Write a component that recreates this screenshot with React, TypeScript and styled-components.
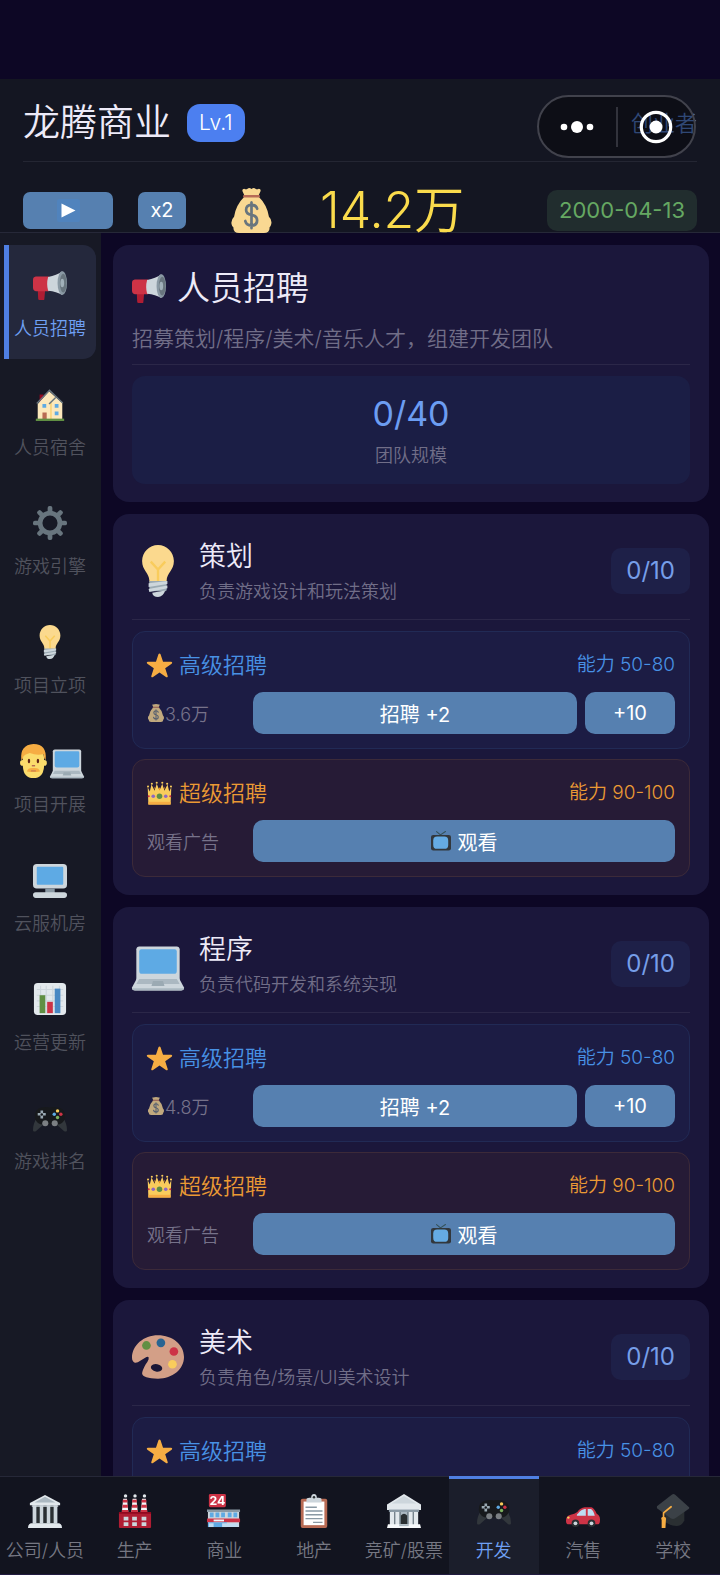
import React from "react";
import styled, { createGlobalStyle, css } from "styled-components";

const GlobalStyle = createGlobalStyle`
  *, *::before, *::after { box-sizing: border-box; }
  html, body { margin: 0; padding: 0; background: #0d0725; }
  body, button {
    font-family: Inter, "Noto Sans CJK SC", sans-serif;
    font-weight: 350;
  }
  h1, h2, h3, p { margin: 0; font-weight: inherit; }
  button { border: 0; padding: 0; color: inherit; cursor: pointer; }
  a { color: inherit; text-decoration: none; }
`;

/* ---------- icons ---------- */

const art = {
  megaphone: (
    <>
      <path fill="#be1931" d="M5 22h8l-1 11q0 1-1 1H7q-1.500 0-1.500-1.500z" />
      <path fill="#dd2e44" d="M3 9h14v15.500H3q-3-.5-3-3.500v-8.500Q0 9.500 3 9z" />
      <path fill="#ccd6dd" d="M16 9.500Q25 8 31 3.500v25Q25 25 16 24q-2-7 0-14.500z" />
      <ellipse cx="31" cy="16" rx="5" ry="12.500" fill="#8899a6" />
      <ellipse cx="32" cy="16" rx="3.500" ry="10" fill="#66757f" />
      <ellipse cx="31" cy="16" rx="2" ry="4.500" fill="#9fb0bb" />
    </>
  ),
  house: (
    <>
      <path fill="#a0041e" d="M7 8h4v8H7z" />
      <path fill="#ffe8b6" d="M5 18 17 4.500 31 17v17H5z" />
      <path fill="#ffcc4d" d="M18 16h2v18h-2z" opacity=".6" />
      <path fill="none" stroke="#66757f" strokeWidth="1.500" d="m4 17.500 13.500-14L31.500 17M24 11l-7 7" />
      <path fill="#55acee" d="M10 18h4v4h-4zm13 0h4v4h-4zm0 8h4v4h-4z" />
      <path fill="#c1694f" d="M10 27h4.500v7H10z" />
      <path fill="#5c913b" d="M3 33.500h30V36H3z" />
    </>
  ),
  gear: (
    <>
      <g fill="#66757f">
        {[0, 45, 90, 135, 180, 225, 270, 315].map((a) => (
          <rect key={a} x="15.500" y="0" width="5" height="9" rx="2" transform={`rotate(${a} 18 18)`} />
        ))}
      </g>
      <circle cx="18" cy="18" r="10.500" fill="none" stroke="#66757f" strokeWidth="5" />
    </>
  ),
  bulb: (
    <>
      <path fill="#ffd983" d="M29 11.060c0 6.440-5 8.440-5 13.440 0 3.100-3.300 3-6 3-3 0-6-.1-6-3 0-5-5-7-5-13.440C7 5 12 0 18 0s11 5 11 11.060z" />
      <path fill="none" stroke="#ffcc4d" strokeWidth="1.600" d="M13 11.500 18 17l5-5.500M18 17v8" />
      <path fill="#99aab5" d="M12 25h12v6q0 1-1 1H13q-1 0-1-1z" />
      <path fill="#ccd6dd" d="M11.500 26.500 24.500 25v2l-13 2zm0 4L24.500 28v2l-12.500 2.500zM14 33l9-1.500Q21.500 36 18 36t-4-3z" />
    </>
  ),
  person: (
    <g transform="translate(3 0) scale(0.860 1)">
      <circle cx="4.500" cy="20" r="3" fill="#ffdc5d" />
      <circle cx="31.500" cy="20" r="3" fill="#ffdc5d" />
      <path fill="#ffdc5d" d="M5 14Q5 4 18 4t13 10v10q-1 12-13 12T5 24z" />
      <path fill="#ffac33" d="M3 17Q1 1 18 0q17 0 15 17-2-1-2.500-6.500-8 2-17-1-6 1.500-8 3.500Q5 17 3 17z" />
      <ellipse cx="12.500" cy="18" rx="1.500" ry="2.300" fill="#662113" />
      <ellipse cx="23.500" cy="18" rx="1.500" ry="2.300" fill="#662113" />
      <path fill="none" stroke="#c1694f" strokeWidth="1.500" d="M16 23h4" />
      <path fill="#ffac33" d="M10 29q1-4 8-3.500 7-.5 8 3.500-8 1.500-16 0z" />
      <path fill="none" stroke="#c1694f" d="M15 28.500h6" />
    </g>
  ),
  laptop: (
    <g transform="translate(0 1.800)">
      <path fill="#ccd6dd" d="M33 29.100C33 30.800 32.700 31 31 31H5c-1.700 0-2-.2-2-1.900V6c0-1.100.9-2 2-2h26c1.100 0 2 .9 2 2z" />
      <path fill="#55acee" d="M6.500 6h23q1.500 0 1.500 1.500V21q0 2-2 2H7q-2 0-2-2V7.500Q5 6 6.500 6z" />
      <path fill="#ccd6dd" d="M4 25h28l4 7.500q.3 2-2 2H2q-2.300 0-2-2z" />
      <path fill="#aab8c2" d="M5 26.500h26l2 3.500H3z" />
      <path fill="#99aab5" d="M14.500 28h7l1 3.500h-9z" />
      <path fill="#aab8c2" d="M0 33h36q-.3 1.500-2 1.500H2Q.3 34.500 0 33z" />
    </g>
  ),
  desktop: (
    <>
      <rect x="0" y="1" width="36" height="26" rx="4" fill="#ccd6dd" />
      <rect x="4" y="4" width="28" height="19" rx="1" fill="#55acee" />
      <path fill="#8899a6" d="M13 27h10v5H13z" />
      <rect x="0" y="31" width="36" height="6" rx="3" fill="#ccd6dd" />
    </>
  ),
  chart: (
    <>
      <rect x="1" y="1" width="34" height="34" rx="4" fill="#e1e8ed" />
      <path fill="none" stroke="#ccd6dd" strokeWidth="1.200" d="M4 8h28M4 14h28M4 20h28M4 26h28M8 4v29M14 4v29M21 4v29M28 4v29" />
      <path fill="#5c913b" d="M7 14h6v19H7z" />
      <path fill="#dd2e44" d="M15 21h6v12h-6z" />
      <path fill="#4289cc" d="M23 7h6v26h-6z" />
    </>
  ),
  gamepad: (
    <>
      <path fill="#31373d" d="M4 18Q0 24 0 31q0 2 3 1l8-7zM32 18q4 6 4 13 0 2-3 1l-8-7z" />
      <path fill="#17191c" d="M9 7q6-1.500 9 0 3-1.500 9 0 8 2 7 11-2 7-9 7H11q-7 0-9-7Q1 9 9 7z" />
      <circle cx="13" cy="23.500" r="3.200" fill="#7a7f84" />
      <circle cx="23" cy="23.500" r="3.200" fill="#7a7f84" />
      <path stroke="#99aab5" strokeWidth="2.800" d="M5 14h8.500M9.300 10v8.500" />
      <circle cx="9.300" cy="14.200" r="1.300" fill="#17191c" />
      <circle cx="26" cy="10.500" r="1.800" fill="#ffcc4d" />
      <circle cx="22.500" cy="14" r="1.800" fill="#55acee" />
      <circle cx="29.500" cy="14" r="1.800" fill="#dd2e44" />
      <circle cx="26" cy="17.500" r="1.800" fill="#77b255" />
    </>
  ),
  star: (
    <path
      fill="#ffac33"
      d="M27.300 34.700 18 28l-9.300 6.700c-1.500 1-3-.1-2.500-1.700l3.600-10.900-9.300-6.600c-1.400-1-.9-2.800.9-2.800h11.500L16.500 1.800c.6-1.600 2.400-1.600 3 0l3.600 10.900h11.500c1.800 0 2.300 1.800.9 2.800l-9.300 6.600L29.800 33c.5 1.600-1 2.700-2.500 1.700z"
    />
  ),
  crown: (
    <>
      <path fill="#f4900c" d="M10 8l3 10h10l3-10-5 6-3-5-3 5z" />
      <path fill="#ffcc4d" d="m1 9 3 6 2.500-10L11 14l3-10 4 10 4-10 3 10 4.500-9L32 15l3-6-1 25H2z" />
      <path fill="#ffac33" d="M2 30h32v4H2z" />
      <g fill="#ffcc4d">
        <circle cx="1.500" cy="8" r="1.500" />
        <circle cx="7" cy="4" r="1.500" />
        <circle cx="14" cy="2.500" r="1.500" />
        <circle cx="22" cy="2.500" r="1.500" />
        <circle cx="29" cy="4" r="1.500" />
        <circle cx="34.500" cy="8" r="1.500" />
      </g>
      <circle cx="18" cy="22" r="4" fill="#5c913b" />
      <circle cx="9" cy="22" r="2.600" fill="#9266cc" />
      <circle cx="27" cy="22" r="2.600" fill="#9266cc" />
      <circle cx="2.500" cy="22" r="1.500" fill="#dd2e44" />
      <circle cx="33.500" cy="22" r="1.500" fill="#dd2e44" />
    </>
  ),
  bag: (
    <g transform="translate(1.800 0) scale(0.900 1)">
      <path fill="#fdd888" d="M12 6.500 10 2.500q-.5-2 1.500-2 1.500 1 3 0T18 .7q2-1.200 3.500-.2t3 0q2 0 1.500 2l-2 4q8 7 9.500 16.500 3 2.500 2 6-.5 2-1.500 2.500.5 4.500-5 4.500H7Q1.500 36 2 31.500.5 30.500.3 29q-.8-3.500 2.200-6Q4 13.500 12 6.500z" />
      <path fill="#bf6952" d="M11 5.500h14q1 1 0 2H11q-1-1 0-2z" />
      <path fill="none" stroke="#67757f" strokeWidth="2.400" strokeLinecap="round" d="M23 16.500Q22 13.500 18 13.500q-4.800.2-4.800 4 0 3.200 4.800 4t5 4.300Q23 30 18 30q-4.500 0-5.500-3.500M18 11.500v20.500" />
    </g>
  ),
  tv: (
    <>
      <path fill="none" stroke="#31535c" strokeWidth="2" strokeLinecap="round" d="m10 1 7 6 9-6" />
      <rect x="0" y="7" width="36" height="28" rx="4" fill="#31373d" />
      <rect x="4" y="10" width="27" height="22" rx="7" fill="#5dadec" />
    </>
  ),
  palette: (
    <>
      <path fill="#d99e82" d="M18 3C8 3 0 10 0 18.500q0 2.500 2 3.500 1.500.3 4-1.500l4-2.500q2-.7 1.500 1.500-.5 1.500-2 3.500Q7 27.500 7 29.500q.5 3.500 11 3.500c10 0 18-6.500 18-15S28 3 18 3z" />
      <ellipse cx="17" cy="25.500" rx="4" ry="2.600" fill="#1b173b" transform="rotate(12 17 25.500)" />
      <circle cx="10" cy="10" r="3" fill="#5c913b" />
      <circle cx="20" cy="8.200" r="3" fill="#226699" />
      <circle cx="29" cy="14.200" r="3" fill="#dd2e44" />
      <circle cx="28" cy="23" r="3" fill="#ffcc4d" />
    </>
  ),
  museum: (
    <>
      <path fill="#66757f" d="M5 12h26v20H5z" />
      <path fill="#e1e8ed" d="M2 9.500 18 1l16 8.500V12H2z" />
      <path fill="#aab8c2" d="m7 9 11-6 11 6z" />
      <path fill="#ccd6dd" d="M5 12h4v19H5zm7.300 0h4v19h-4zm7.400 0h4v19h-4zM27 12h4v19h-4z" />
      <path fill="#292f33" d="M9 13h3.300v18H9zm7.300 0h3.400v18h-3.400zm7.400 0H27v18h-3.300z" />
      <path fill="#e1e8ed" d="M3 31h30q3 1 3 5H0q0-4 3-5z" />
      <path fill="#ccd6dd" d="M4 12h28v1.500H4z" />
    </>
  ),
  factory: (
    <>
      {[4, 14, 24].map((x) => (
        <g key={x}>
          <path fill="#f5f8fa" d={`M${x + 1.5} 5h4l1.500 15h-7z`} />
          <path fill="#dd2e44" d={`M${x + 1} 6h5v3H${x + 1}zM${x + 1} 11.500h5.500v3H${x + 0.5}zM${x} 17h7v3H${x}z`} />
          <circle cx={x + 4} cy="2" r="1.800" fill="#e1e8ed" />
        </g>
      ))}
      <rect x="1" y="19" width="34" height="17" rx="1" fill="#be1931" />
      <path fill="#a0041e" d="M1 19h34v2H1z" />
      <path fill="#ccd6dd" d="M6 24h5v4H6zm9 0h5v4h-5zm10 0h5v4h-5zM6 30h5v4H6zm9 0h5v4h-5zm10 0h5v4h-5z" />
    </>
  ),
  store: (
    <>
      <path fill="#ccd6dd" d="M1 18h33v17H1z" />
      <path fill="#55acee" d="M3 19.500h4v5H3zm6 0h4v5H9zm6 0h4v5h-4zM22 19.500h4v5h-4zm6 0h4v5h-4z" />
      <path fill="#8899a6" d="M0 16.500h35V19H0z" />
      <path fill="#dd2e44" d="M0 26h35v4H0z" />
      <path fill="#f5f8fa" d="M7 27h11v2H7z" />
      <path fill="#55acee" d="M1 30h20v5H1z" />
      <path fill="#bdddf4" d="M2 31h5v4H2zm14 0h17v4H16z" />
      <rect x="2" y="0" width="18" height="14" rx="1.500" fill="#dd2e44" />
      <text x="11" y="11.500" textAnchor="middle" fill="#fff" fontSize="13" fontWeight="700">24</text>
    </>
  ),
  clipboard: (
    <>
      <rect x="4" y="5" width="28" height="31" rx="2" fill="#c1694f" />
      <path fill="#fff" d="M7 8h22v25H7z" />
      <path fill="#ccd6dd" d="M10 9V6q0-2 3-2h2q0-4 3-4t3 4h2q3 0 3 2v3z" />
      <circle cx="18" cy="3.500" r="1.300" fill="#292f33" />
      <path stroke="#8899a6" strokeWidth="1.400" d="M9 14h12M9 18h18M9 22h18M9 26h18M17 30h10" />
    </>
  ),
  bank: (
    <>
      <path fill="#aab8c2" d="M4 15h28v18H4z" />
      <path fill="#e1e8ed" d="M0 11 18 0l18 11v6H0z" />
      <path fill="#ccd6dd" d="m5 10 13-8 13 8z" />
      <path fill="#8899a6" d="M2 16.500h32V19H2z" />
      <path fill="#292f33" d="M14.500 23q3.500-4 7 0v9h-7z" />
      <path fill="#66757f" d="M7.500 19H9v14H7.500zM13 19h1.500v14H13zm8.500 0H23v14h-1.500zM27 19h1.500v14H27z" />
      <path fill="#e1e8ed" d="M3 19h4.500v14H3zm6 0h4v14H9zm14 0h4v14h-4zm5.500 0H33v14h-4.500z" />
      <path fill="#f5f8fa" d="M1 32h34l1 4H0z" />
      <path fill="#aab8c2" d="M13 32h10v2H13z" />
    </>
  ),
  car: (
    <>
      <path fill="#dd2e44" d="M12 19q3-4.500 8-5h7q3 1 5.500 7 3.500 1.500 3.500 6 0 5-2 5H2q-2 0-2-4 0-5 5-6 4-1 7-3z" />
      <path fill="#bbddf5" d="M13 20.500q3-4 7-4.500h1v7h-9.500q-.5-1 1.500-2.500zM23 16h3.500q2.500 1.500 4 7H23z" />
      <circle cx="10" cy="31" r="4" fill="#292f33" />
      <circle cx="27" cy="31" r="4" fill="#292f33" />
      <circle cx="10" cy="31" r="2" fill="#ccd6dd" />
      <circle cx="27" cy="31" r="2" fill="#ccd6dd" />
      <circle cx="2.500" cy="25" r="1.300" fill="#ffcc4d" />
    </>
  ),
  cap: (
    <>
      <path fill="#292f33" d="M10 15h20v13q-3 6-8 6-6 0-12-4z" />
      <path fill="#3a4148" d="M1 13 17 .5q1.500-.8 3 0L35 14q.6 1-.5 2L20 26q-2 1-4 0L1 15z" />
      <path fill="none" stroke="#ffac33" strokeWidth="1.800" strokeLinecap="round" d="M16 13.500 8 20v6" />
      <path fill="#ffac33" d="M6 27.500Q4.500 24 8 24t2.500 3.500L10 36H6z" />
    </>
  ),
  play: (
    <>
      <rect x="0" y="0" width="36" height="36" rx="4" fill="#4a84c6" />
      <path fill="#fff" d="M7 7v22l22-11z" />
    </>
  ),
};

type IconName = keyof typeof art;

const IconSvg = styled.svg`
  display: block;
  flex: none;
  overflow: visible;
  filter: saturate(0.88);
`;

const Icon = ({ name, size }: { name: IconName; size: number }) => (
  <IconSvg width={size} height={size} viewBox="0 0 36 36" aria-hidden="true">
    {art[name]}
  </IconSvg>
);

/* ---------- shell ---------- */

const Shell = styled.div`
  display: flex;
  flex-direction: column;
  height: 100vh;
  padding-top: 79px;
  color: #edeaf8;
  background: #0d0725;
`;

const Header = styled.header`
  position: relative;
  flex: none;
  padding: 0 23px;
  background: #141622;
  border-bottom: 1px solid #262838;
`;

const TitleRow = styled.div`
  display: flex;
  align-items: center;
  gap: 16px;
  height: 83px;
  padding-top: 6px;
  border-bottom: 1px solid #242633;
`;

const CompanyName = styled.h1`
  font-size: 37px;
  line-height: 48px;
`;

const LevelBadge = styled.span`
  padding: 0 12px;
  border-radius: 13px;
  background: #4c7ff0;
  color: #fff;
  font-size: 21px;
  line-height: 38px;
`;

const Rank = styled.span`
  margin-left: auto;
  color: #5a8ae0;
  font-size: 22px;
  line-height: 30px;
`;

const Capsule = styled.div`
  position: absolute;
  top: 16px;
  right: 24px;
  display: flex;
  align-items: center;
  width: 159px;
  height: 63px;
  border: 2px solid #41424c;
  border-radius: 32px;
  background: rgba(5, 5, 10, 0.5);
`;

const CapsuleButton = styled.button`
  display: flex;
  flex: 1;
  align-items: center;
  justify-content: center;
  height: 40px;
  background: none;

  & + & { border-left: 2px solid #32333c; }
`;

const StatusRow = styled.div`
  display: flex;
  align-items: center;
  height: 70px;
  padding-top: 26px;
`;

const SpeedControls = styled.div`
  display: flex;
  gap: 25px;
`;

const actionStyle = css`
  display: flex;
  align-items: center;
  justify-content: center;
  background: #5680b0;
  color: #fff;
`;

const SpeedButton = styled.button<{ $wide?: boolean }>`
  ${actionStyle}
  width: ${(p) => (p.$wide ? 90 : 48)}px;
  height: 37px;
  border-radius: 7px;
  font-size: 20px;
  font-weight: 400;
`;

const Money = styled.div`
  display: flex;
  align-items: center;
  gap: 46px;
  margin-left: 43px;
  color: #fadb4c;
  font-size: 50px;
  line-height: 44px;
`;

const DateBadge = styled.time`
  margin-left: auto;
  padding: 0 12px;
  border-radius: 10px;
  background: #212d2e;
  color: #65a862;
  font-size: 22px;
  font-weight: 400;
  line-height: 41px;
`;

const Body = styled.div`
  display: flex;
  flex: 1;
  min-height: 0;
`;

/* ---------- side menu ---------- */

const SideMenu = styled.nav`
  display: flex;
  flex: none;
  flex-direction: column;
  gap: 5px;
  width: 101px;
  padding: 12px 5px 0 4px;
  background: #171925;
`;

const SideLink = styled.a<{ $active?: boolean }>`
  display: flex;
  flex-direction: column;
  align-items: center;
  height: 114px;
  padding-top: 23px;
  border-radius: 0 13px 13px 0;
  background: ${(p) => (p.$active ? "#24283c" : "none")};
  box-shadow: ${(p) => (p.$active ? "inset 5px 0 #4f7fe3" : "none")};
  color: ${(p) => (p.$active ? "#6fa0f4" : "#50525d")};
  font-size: 18px;
  line-height: 28px;
  white-space: nowrap;
`;

const SideIcons = styled.span`
  display: flex;
  height: 34px;
  margin-bottom: 13px;
`;

/* ---------- content ---------- */

const Content = styled.main`
  display: flex;
  flex: 1;
  flex-direction: column;
  gap: 12px;
  min-width: 0;
  padding: 12px 11px 12px 12px;
  overflow-y: auto;
  scrollbar-width: none;
`;

const Card = styled.section`
  flex: none;
  padding: 20px 19px 18px;
  border-radius: 16px;
  background: #1b173b;
`;

const OverviewHead = styled.div`
  height: 100px;
  margin-bottom: 11px;
  border-bottom: 1px solid #2b2748;
`;

const OverviewTitle = styled.h2`
  display: flex;
  align-items: center;
  gap: 11px;
  font-size: 33px;
  line-height: 46px;
`;

const Muted = styled.p<{ $large?: boolean }>`
  color: #716e88;
  font-size: ${(p) => (p.$large ? 21 : 18)}px;
  line-height: ${(p) => (p.$large ? 30 : 28)}px;
`;

const OverviewText = styled(Muted)`
  margin-top: 13px;
`;

const TeamStat = styled.div`
  display: flex;
  flex-direction: column;
  align-items: center;
  padding: 14px 0;
  border-radius: 13px;
  background: #1b1e45;
`;

const TeamValue = styled.strong`
  margin-bottom: 4px;
  color: #6c9df2;
  font-size: 34px;
  font-weight: 400;
  line-height: 48px;
`;

const RoleHead = styled.div`
  display: flex;
  align-items: center;
  gap: 15px;
  height: 86px;
  margin-bottom: 11px;
  padding-bottom: 12px;
  border-bottom: 1px solid #2b2748;
`;

const RoleText = styled.div`
  flex: 1;
`;

const RoleName = styled.h2`
  font-size: 27px;
  line-height: 42px;
`;

const CountBadge = styled.span`
  padding: 0 15px;
  border-radius: 10px;
  background: #1e2048;
  color: #769ee8;
  font-size: 24px;
  font-weight: 400;
  line-height: 46px;
`;

const tones = {
  senior: { text: "#4891e4", back: "#1c1c44", edge: "#212a55" },
  elite: { text: "#eb9a34", back: "#261b36", edge: "#3c2a39" },
};

const Tier = styled.div<{ $tone: keyof typeof tones }>`
  padding: 14px;
  border: 1px solid ${(p) => tones[p.$tone].edge};
  border-radius: 13px;
  background: ${(p) => tones[p.$tone].back};
  color: ${(p) => tones[p.$tone].text};

  & + & { margin-top: 10px; }
`;

const TierHead = styled.div`
  display: flex;
  align-items: center;
  gap: 7px;
  height: 38px;
  margin-bottom: 8px;
`;

const TierName = styled.h3`
  flex: 1;
  font-size: 22px;
  line-height: 32px;
`;

const Ability = styled.span`
  font-size: 19px;
  line-height: 28px;
`;

const TierRow = styled.div`
  display: flex;
  gap: 8px;
`;

const Cost = styled.span`
  display: flex;
  flex: none;
  align-items: center;
  width: 98px;
  color: #76728a;
  font-size: 18px;
`;

const CoinIcon = styled.span`
  opacity: 0.75;
`;

const ActionButton = styled.button<{ $small?: boolean }>`
  ${actionStyle}
  flex: ${(p) => (p.$small ? "none" : 1)};
  gap: 7px;
  width: ${(p) => (p.$small ? "90px" : "auto")};
  height: 42px;
  border-radius: 10px;
  font-size: 20px;
  font-weight: 400;
`;

/* ---------- bottom tabs ---------- */

const TabBar = styled.nav`
  display: flex;
  flex: none;
  height: 99px;
  padding-right: 2px;
  background: #12141f;
  border-top: 1px solid #262838;
  border-bottom: 1px solid #211b40;
`;

const Tab = styled.a<{ $active?: boolean }>`
  display: flex;
  flex: 1 1 0;
  flex-direction: column;
  align-items: center;
  gap: 9px;
  min-width: 0;
  margin-top: -1px;
  padding-top: 15px;
  border-top: 3px solid ${(p) => (p.$active ? "#4f7fe3" : "transparent")};
  background: ${(p) => (p.$active ? "#1b1e2b" : "none")};
  background-clip: padding-box;
  color: ${(p) => (p.$active ? "#6fa0f4" : "#767883")};
  font-size: 18px;
  line-height: 28px;
  white-space: nowrap;
`;

/* ---------- data ---------- */

const sideItems: { label: string; icons: IconName[] }[] = [
  { label: "人员招聘", icons: ["megaphone"] },
  { label: "人员宿舍", icons: ["house"] },
  { label: "游戏引擎", icons: ["gear"] },
  { label: "项目立项", icons: ["bulb"] },
  { label: "项目开展", icons: ["person", "laptop"] },
  { label: "云服机房", icons: ["desktop"] },
  { label: "运营更新", icons: ["chart"] },
  { label: "游戏排名", icons: ["gamepad"] },
];

type Role = { name: string; text: string; icon: IconName; cost?: string };

const roles: Role[] = [
  { name: "策划", text: "负责游戏设计和玩法策划", icon: "bulb", cost: "3.6万" },
  { name: "程序", text: "负责代码开发和系统实现", icon: "laptop", cost: "4.8万" },
  { name: "美术", text: "负责角色/场景/UI美术设计", icon: "palette" },
];

const tabs: { label: string; icon: IconName }[] = [
  { label: "公司/人员", icon: "museum" },
  { label: "生产", icon: "factory" },
  { label: "商业", icon: "store" },
  { label: "地产", icon: "clipboard" },
  { label: "竞矿/股票", icon: "bank" },
  { label: "开发", icon: "gamepad" },
  { label: "汽售", icon: "car" },
  { label: "学校", icon: "cap" },
];

const RoleCard = ({ name, text, icon, cost }: Role) => (
  <Card>
    <RoleHead>
      <Icon name={icon} size={52} />
      <RoleText>
        <RoleName>{name}</RoleName>
        <Muted>{text}</Muted>
      </RoleText>
      <CountBadge>0/10</CountBadge>
    </RoleHead>
    <Tier $tone="senior">
      <TierHead>
        <Icon name="star" size={25} />
        <TierName>高级招聘</TierName>
        <Ability>能力 50-80</Ability>
      </TierHead>
      {cost && (
        <TierRow>
          <Cost>
            <CoinIcon><Icon name="bag" size={18} /></CoinIcon>
            {cost}
          </Cost>
          <ActionButton type="button">招聘 +2</ActionButton>
          <ActionButton type="button" $small>+10</ActionButton>
        </TierRow>
      )}
    </Tier>
    {cost && (
      <Tier $tone="elite">
        <TierHead>
          <Icon name="crown" size={25} />
          <TierName>超级招聘</TierName>
          <Ability>能力 90-100</Ability>
        </TierHead>
        <TierRow>
          <Cost>观看广告</Cost>
          <ActionButton type="button">
            <Icon name="tv" size={20} />
            观看
          </ActionButton>
        </TierRow>
      </Tier>
    )}
  </Card>
);

export default function App() {
  return (
    <>
      <GlobalStyle />
      <Shell>
        <Header>
          <TitleRow>
            <CompanyName>龙腾商业</CompanyName>
            <LevelBadge>Lv.1</LevelBadge>
            <Rank>创业者</Rank>
          </TitleRow>
          <StatusRow>
            <SpeedControls>
              <SpeedButton type="button" $wide aria-label="播放">
                <Icon name="play" size={23} />
              </SpeedButton>
              <SpeedButton type="button">x2</SpeedButton>
            </SpeedControls>
            <Money>
              <Icon name="bag" size={45} />
              <span>14.2万</span>
            </Money>
            <DateBadge dateTime="2000-04-13">2000-04-13</DateBadge>
          </StatusRow>
          <Capsule>
            <CapsuleButton type="button" aria-label="更多">
              <svg width="34" height="12" viewBox="0 0 34 12" fill="#fff">
                <circle cx="4" cy="6" r="3.300" />
                <circle cx="17" cy="6" r="6" />
                <circle cx="30" cy="6" r="3.300" />
              </svg>
            </CapsuleButton>
            <CapsuleButton type="button" aria-label="关闭">
              <svg width="34" height="34" viewBox="0 0 34 34">
                <circle cx="17" cy="17" r="14.700" fill="none" stroke="#fff" strokeWidth="3.200" />
                <circle cx="17" cy="17" r="6.500" fill="#fff" />
              </svg>
            </CapsuleButton>
          </Capsule>
        </Header>
        <Body>
          <SideMenu>
            {sideItems.map((item, i) => (
              <SideLink key={item.label} href="#" $active={i === 0}>
                <SideIcons>
                  {item.icons.map((name) => (
                    <Icon key={name} name={name} size={34} />
                  ))}
                </SideIcons>
                {item.label}
              </SideLink>
            ))}
          </SideMenu>
          <Content>
            <Card>
              <OverviewHead>
                <OverviewTitle>
                  <Icon name="megaphone" size={34} />
                  人员招聘
                </OverviewTitle>
                <OverviewText $large>招募策划/程序/美术/音乐人才，组建开发团队</OverviewText>
              </OverviewHead>
              <TeamStat>
                <TeamValue>0/40</TeamValue>
                <Muted>团队规模</Muted>
              </TeamStat>
            </Card>
            {roles.map((role) => (
              <RoleCard key={role.name} {...role} />
            ))}
          </Content>
        </Body>
        <TabBar>
          {tabs.map((tab) => (
            <Tab key={tab.label} href="#" $active={tab.label === "开发"}>
              <Icon name={tab.icon} size={34} />
              {tab.label}
            </Tab>
          ))}
        </TabBar>
      </Shell>
    </>
  );
}
